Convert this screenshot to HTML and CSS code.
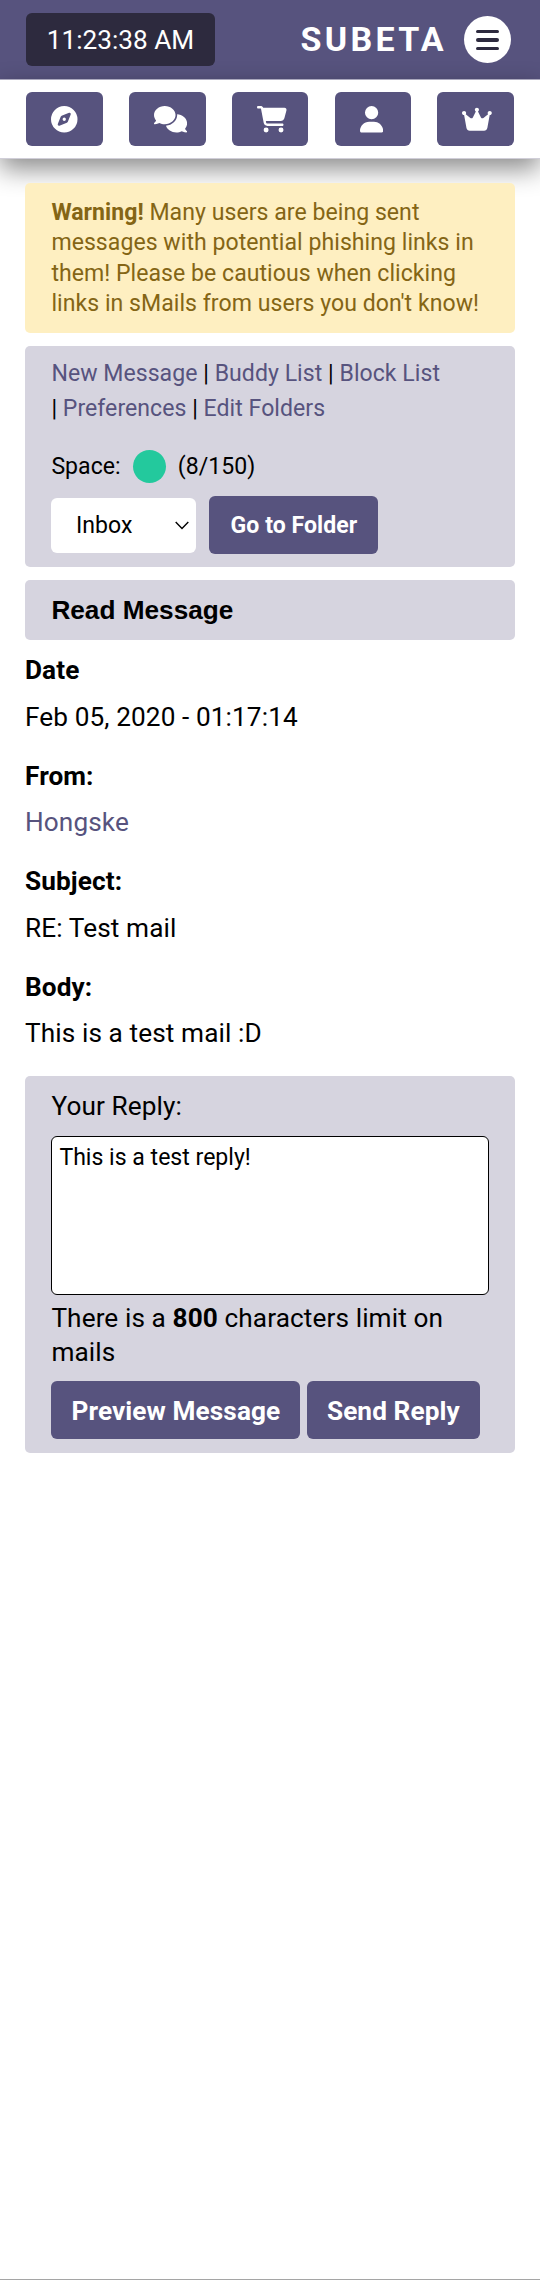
FILE: index.html
```html
<!DOCTYPE html>
<html lang="en">
<head>
<meta charset="utf-8">
<title>Subeta</title>
<link rel="stylesheet" href="styles.css">
</head>
<body>
<div class="page">
  <header class="topbar">
    <div class="clock">11:23:38 AM</div>
    <div class="brand">
      <span class="brand-name">SUBETA</span>
      <button class="menu" aria-label="Menu"><i></i><i></i><i></i></button>
    </div>
  </header>
  <nav class="nav">
    <a class="nav-btn"><svg class="icon" viewBox="0 0 512 512"><path d="M256 512A256 256 0 1 0 256 0a256 256 0 1 0 0 512zm50.7-186.9L162.4 380.6c-19.4 7.5-38.5-11.6-31-31l55.5-144.3c3.3-8.5 9.9-15.1 18.4-18.4l144.3-55.5c19.4-7.5 38.5 11.6 31 31L325.1 306.7c-3.2 8.5-9.9 15.1-18.4 18.4zM288 256a32 32 0 1 0 -64 0 32 32 0 1 0 64 0z"/></svg></a>
    <a class="nav-btn"><svg class="icon" viewBox="0 0 640 512"><path d="M208 352c114.9 0 208-78.8 208-176S322.9 0 208 0S0 78.8 0 176c0 38.6 14.7 74.3 39.6 103.4c-3.5 9.4-8.7 17.7-14.2 24.7c-4.8 6.2-9.7 11-13.3 14.3c-1.8 1.6-3.3 2.9-4.3 3.7c-.5 .4-.9 .7-1.1 .8l-.2 .2C1 327.2-1.4 334.4 .8 340.9S9.1 352 16 352c21.8 0 43.8-5.6 62.1-12.5c9.2-3.5 17.8-7.4 25.2-11.4C134.1 343.3 169.8 352 208 352zM448 176c0 112.3-99.1 196.9-216.5 207C255.8 457.4 336.4 512 432 512c38.2 0 73.9-8.7 104.7-23.9c7.5 4 16 7.9 25.2 11.4c18.3 6.9 40.3 12.5 62.1 12.5c6.9 0 13.1-4.5 15.2-11.1c2.1-6.6-.2-13.8-5.8-17.9l-.2-.2c-.2-.2-.6-.4-1.1-.8c-1-.8-2.5-2-4.3-3.7c-3.6-3.3-8.5-8.1-13.3-14.3c-5.5-7-10.7-15.4-14.2-24.7c24.9-29 39.6-64.7 39.6-103.4c0-92.8-84.9-168.9-192.6-175.5c.4 5.1 .6 10.3 .6 15.5z"/></svg></a>
    <a class="nav-btn"><svg class="icon" viewBox="0 0 576 512"><path d="M0 24C0 10.7 10.7 0 24 0H69.5c22 0 41.5 12.8 50.6 32h411c26.3 0 45.5 25 38.6 50.4l-41 152.3c-8.5 31.4-37 53.3-69.5 53.3H170.7l5.4 28.5c2.2 11.3 12.1 19.5 23.6 19.5H488c13.3 0 24 10.7 24 24s-10.7 24-24 24H199.7c-34.6 0-64.3-24.6-70.7-58.5L77.4 54.5c-.7-3.8-4-6.5-7.9-6.5H24C10.7 48 0 37.3 0 24zM128 464a48 48 0 1 1 96 0 48 48 0 1 1 -96 0zm336-48a48 48 0 1 1 0 96 48 48 0 1 1 0-96z"/></svg></a>
    <a class="nav-btn"><svg class="icon" viewBox="0 0 448 512"><path d="M224 256A128 128 0 1 0 224 0a128 128 0 1 0 0 256zm-45.7 48C79.8 304 0 383.8 0 482.3C0 498.7 13.3 512 29.7 512H418.3c16.4 0 29.7-13.3 29.7-29.7C448 383.8 368.2 304 269.7 304H178.3z"/></svg></a>
    <a class="nav-btn"><svg class="icon" viewBox="0 0 576 512"><path d="M309 106c11.4-7 19-19.7 19-34c0-22.1-17.9-40-40-40s-40 17.9-40 40c0 14.4 7.6 27 19 34L209.7 220.6c-9.1 18.2-32.7 23.4-48.6 10.7L72 160c5-6.7 8-15 8-24c0-22.1-17.9-40-40-40S0 113.9 0 136s17.9 40 40 40c.2 0 .5 0 .7 0L86.4 427.4c5.5 30.4 32 52.6 63 52.6H426.6c30.9 0 57.4-22.1 63-52.6L535.3 176c.2 0 .5 0 .7 0c22.1 0 40-17.9 40-40s-17.9-40-40-40s-40 17.9-40 40c0 9 3 17.3 8 24l-89.1 71.3c-15.9 12.7-39.5 7.5-48.6-10.7L309 106z"/></svg></a>
  </nav>
  <main class="content">
    <div class="alert"><b>Warning!</b> Many users are being sent<br>messages with potential phishing links in<br>them! Please be cautious when clicking<br>links in sMails from users you don't know!</div>
    <section class="panel folders">
      <div class="links"><a>New Message</a> | <a>Buddy List</a> | <a>Block List</a><br>| <a>Preferences</a> | <a>Edit Folders</a></div>
      <div class="space"><span>Space:</span><i class="dot"></i><span>(8/150)</span></div>
      <div class="folder-row">
        <div class="select"><span>Inbox</span><svg class="chevron" viewBox="0 0 14 9"><path d="M.7 1 7 7.5 13.3 1"/></svg></div>
        <button class="btn btn-small">Go to Folder</button>
      </div>
    </section>
    <h1 class="panel title">Read Message</h1>
    <dl class="message">
      <dt>Date</dt><dd>Feb 05, 2020 - 01:17:14</dd>
      <dt>From:</dt><dd><a>Hongske</a></dd>
      <dt>Subject:</dt><dd>RE: Test mail</dd>
      <dt>Body:</dt><dd>This is a test mail :D</dd>
    </dl>
    <section class="panel reply">
      <div class="reply-label">Your Reply:</div>
      <textarea class="reply-text">This is a test reply!</textarea>
      <div class="limit">There is a <b>800</b> characters limit on<br>mails</div>
      <div class="actions"><button class="btn preview">Preview Message</button><button class="btn send">Send Reply</button></div>
    </section>
  </main>
</div>
</body>
</html>
```

FILE: styles.css
```css
* { box-sizing: border-box; }
body { margin: 0; background: #fff; color: #000; font: 26.2px/34px Roboto, sans-serif; letter-spacing: .1px; }
a { color: #57537e; }
button { font: inherit; letter-spacing: inherit; border: 0; padding: 0; }
.page { height: 2280px; border-bottom: 1px solid #a5a5a5; overflow: hidden; white-space: nowrap; }
.topbar { height: 79px; background: #57537e; display: flex; align-items: center; justify-content: space-between; padding: 0 29px 0 26px; }
.clock { width: 189px; height: 53px; border-radius: 6px; background: #2d2a3e; color: #fff; line-height: 54px; letter-spacing: 0; text-align: center; }
.brand { display: flex; align-items: center; gap: 17px; }
.brand-name { color: #fff; font-size: 34px; line-height: 40px; font-weight: 700; letter-spacing: 3.3px; padding-bottom: 2px; }
.menu { width: 47px; height: 47px; border-radius: 50%; background: #fff; display: flex; flex-direction: column; align-items: center; justify-content: center; gap: 5px; padding-top: 1px; }
.menu i { width: 23px; height: 3.5px; border-radius: 2px; background: #2d2a3e; }
.nav { height: 80px; border-top: 1px solid #aaa8bd; border-bottom: 1px solid #d0ced8; background: #fff; display: flex; justify-content: space-between; padding: 12px 26px 0 26.3px; box-shadow: 0 10px 26px rgba(0,0,0,.46); }
.nav-btn { width: 76.7px; height: 54px; border-radius: 6px; background: #57537e; padding: 14px 0 0 25px; }
.icon { display: block; height: 26.5px; fill: #fff; }
.content { padding: 24px 25px 0; }
.alert { height: 150px; border-radius: 5px; background: #feefc1; color: #846515; font-size: 23.07px; line-height: 30.6px; letter-spacing: .04px; padding: 14.7px 26.4px 0; margin-bottom: 13px; }
.panel { border-radius: 5px; background: #d6d4df; padding: 0 26.4px; margin: 0 0 13px; }
.folders { height: 221px; font-size: 23.07px; line-height: 35px; letter-spacing: .04px; padding-top: 10px; }
.space { display: flex; align-items: center; gap: 12px; margin-top: 23px; }
.dot { width: 33px; height: 33px; border-radius: 50%; background: #23c99d; }
.folder-row { display: flex; align-items: center; gap: 13px; margin-top: 12px; }
.select { width: 145px; height: 55px; border-radius: 6px; background: #fff; display: flex; align-items: center; justify-content: space-between; padding: 0 7px 0 24.5px; }
.chevron { width: 14px; height: 9px; fill: none; stroke: #000; stroke-width: 1.4; }
.btn { height: 58px; border-radius: 6px; background: #57537e; color: #fff; font-weight: 700; text-align: center; padding-top: 1px; }
.btn-small { width: 169px; font-size: 23.07px; }
.title { height: 60px; font: 700 26.2px/60px "Liberation Sans", Arial, sans-serif; letter-spacing: 0; }
.message { margin: 0; height: 423px; }
.message dt { font-weight: 700; height: 46.5px; }
.message dd { margin: 0; height: 59px; }
.reply { height: 377px; padding-top: 13px; }
.reply-text { display: block; width: 438px; height: 159px; margin: 13px 0 7px; padding: 7px 7px 0; border: 1.5px solid #000; border-radius: 6px; resize: none; background: #fff; color: #000; font: 23.07px/28px Roboto, sans-serif; overflow: hidden; }
.limit { line-height: 33.5px; }
.actions { display: flex; gap: 6.5px; margin-top: 12px; }
.preview { width: 249px; }
.send { width: 173px; }
```
